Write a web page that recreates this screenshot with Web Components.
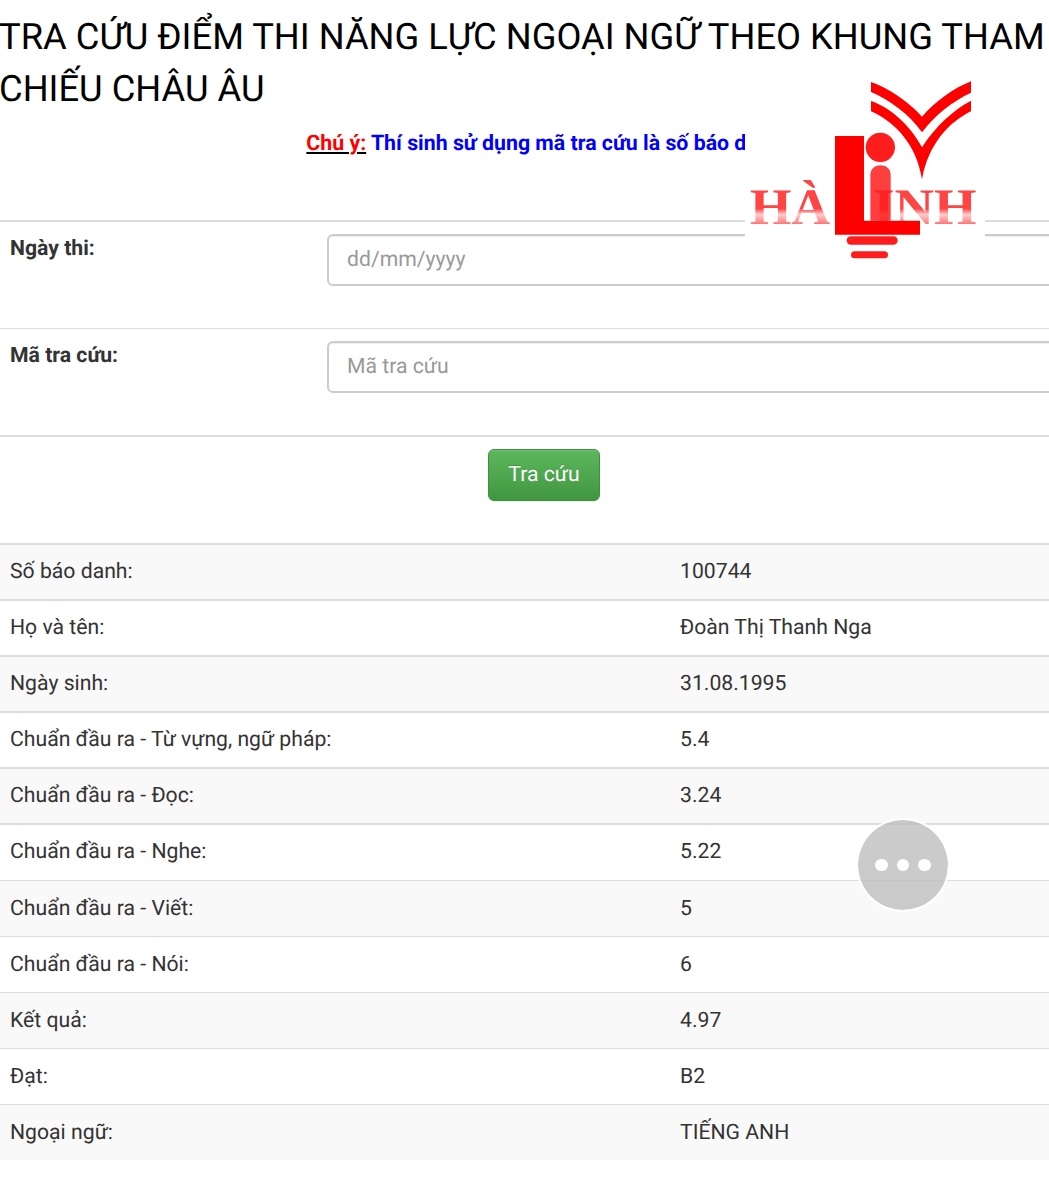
<!DOCTYPE html>
<html lang="vi">
<head>
<meta charset="utf-8">
<title>Tra cứu điểm thi</title>
<style>
    html, body {
        margin: 0;
        padding: 0;
        background: #fff;
        overflow: hidden;
        height: 1201px;
    }
    body {
        font-family: Roboto, "Liberation Sans", sans-serif;
        color: #333;
        text-rendering: geometricPrecision;
    }
    main {
        display: block;
        width: 1088px;
    }
</style>
</head>
<body>
<main>
    <page-title>TRA CỨU ĐIỂM THI NĂNG LỰC NGOẠI NGỮ THEO KHUNG THAM CHIẾU CHÂU ÂU</page-title>
    <page-note><u>Chú ý:</u> <span>Thí sinh sử dụng mã tra cứu là số báo danh</span></page-note>
    <form-row first label="Ngày thi:" placeholder="dd/mm/yyyy"></form-row>
    <form-row label="Mã tra cứu:" placeholder="Mã tra cứu"></form-row>
    <search-button>Tra cứu</search-button>
    <result-table>
        <result-row label="Số báo danh:">100744</result-row>
        <result-row label="Họ và tên:">Đoàn Thị Thanh Nga</result-row>
        <result-row label="Ngày sinh:">31.08.1995</result-row>
        <result-row label="Chuẩn đầu ra - Từ vựng, ngữ pháp:">5.4</result-row>
        <result-row label="Chuẩn đầu ra - Đọc:">3.24</result-row>
        <result-row label="Chuẩn đầu ra - Nghe:">5.22</result-row>
        <result-row label="Chuẩn đầu ra - Viết:">5</result-row>
        <result-row label="Chuẩn đầu ra - Nói:">6</result-row>
        <result-row label="Kết quả:">4.97</result-row>
        <result-row label="Đạt:">B2</result-row>
        <result-row label="Ngoại ngữ:">TIẾNG ANH</result-row>
    </result-table>
</main>
<site-logo></site-logo>
<more-button></more-button>

<script>
class PageTitle extends HTMLElement {
    constructor() {
        super();
        this.attachShadow({ mode: 'open' });
        this.shadowRoot.innerHTML = `
            <style>
                :host {
                    display: block;
                    width: 1050px;
                    margin-left: -1px;
                    padding-top: 11px;
                    font-size: 36.35px;
                    line-height: 52px;
                    font-weight: 400;
                    color: #000;
                }
            </style>
            <slot></slot>
        `;
    }
}

class PageNote extends HTMLElement {
    constructor() {
        super();
        this.attachShadow({ mode: 'open' });
        this.shadowRoot.innerHTML = `
            <style>
                :host {
                    display: block;
                    height: 105px;
                    padding-top: 15px;
                    box-sizing: border-box;
                    text-align: center;
                    font-size: 21.3px;
                    line-height: 28px;
                    font-weight: 700;
                }
                ::slotted(u) {
                    color: #f00;
                    text-decoration-color: #000;
                }
                ::slotted(span) {
                    color: #00f;
                }
            </style>
            <slot></slot>
        `;
    }
}

class FormRow extends HTMLElement {
    constructor() {
        super();
        this.attachShadow({ mode: 'open' });
        this.shadowRoot.innerHTML = `
            <style>
                :host {
                    display: grid;
                    grid-template-columns: 327px 1fr;
                    height: 107px;
                    box-sizing: border-box;
                    border-top: 1px solid #ddd;
                }
                :host([first]) {
                    height: 108px;
                    border-top: 2px solid #ddd;
                }
                label {
                    padding: 15px 0 0 10px;
                    font-size: 21.2px;
                    line-height: 24px;
                    font-weight: 700;
                    color: #333;
                }
                input {
                    display: block;
                    width: 100%;
                    height: 52px;
                    margin-top: 12px;
                    box-sizing: border-box;
                    padding: 0 18px 2px;
                    border: 2px solid #ccc;
                    border-radius: 6px;
                    box-shadow: inset 0 1px 1px rgba(0,0,0,.075);
                    font: 400 21.2px Roboto, sans-serif;
                    text-rendering: geometricPrecision;
                    color: #555;
                    background: #fff;
                }
                input::placeholder {
                    color: #999;
                    opacity: 1;
                }
            </style>
            <label></label>
            <div><input type="text"></div>
        `;
    }

    connectedCallback() {
        this.shadowRoot.querySelector('label').textContent = this.getAttribute('label');
        this.shadowRoot.querySelector('input').placeholder = this.getAttribute('placeholder');
    }
}

class SearchButton extends HTMLElement {
    constructor() {
        super();
        this.attachShadow({ mode: 'open' });
        this.shadowRoot.innerHTML = `
            <style>
                :host {
                    display: flex;
                    justify-content: center;
                    height: 108px;
                    box-sizing: border-box;
                    border-top: 2px solid #ddd;
                    padding-top: 12px;
                }
                button {
                    width: 112px;
                    height: 52px;
                    box-sizing: border-box;
                    padding: 0 0 2px;
                    border: 1px solid #3e8f3e;
                    border-radius: 6px;
                    background: linear-gradient(to bottom, #5cb85c, #419641);
                    box-shadow: inset 0 1px 0 rgba(255,255,255,.15), 0 1px 1px rgba(0,0,0,.075);
                    text-shadow: 0 -1px 0 rgba(0,0,0,.2);
                    font: 400 21.2px Roboto, sans-serif;
                    text-rendering: geometricPrecision;
                    color: #fff;
                }
            </style>
            <button type="button"><slot></slot></button>
        `;
    }
}

class ResultTable extends HTMLElement {
    constructor() {
        super();
        this.attachShadow({ mode: 'open' });
        this.shadowRoot.innerHTML = `
            <style>
                :host {
                    display: block;
                }
            </style>
            <slot></slot>
        `;
    }
}

class ResultRow extends HTMLElement {
    constructor() {
        super();
        this.attachShadow({ mode: 'open' });
        this.shadowRoot.innerHTML = `
            <style>
                :host {
                    display: grid;
                    grid-template-columns: 670px 1fr;
                    height: 56px;
                    box-sizing: border-box;
                    padding-bottom: 2px;
                    border-top: 2px solid #ddd;
                    align-items: center;
                    font-size: 21.2px;
                    color: #333;
                    background: #fff;
                }
                :host(:nth-child(odd)) {
                    background: #f9f9f9;
                }
                :host(:nth-child(6)) {
                    height: 57px;
                    padding-bottom: 3px;
                }
                :host(:nth-child(n+7)) {
                    border-top-width: 1px;
                    padding-top: 1px;
                }
                :host(:nth-child(n+8)) {
                    padding-top: 2px;
                }
                div {
                    padding-left: 10px;
                }
            </style>
            <div id="label"></div>
            <div><slot></slot></div>
        `;
    }

    connectedCallback() {
        this.shadowRoot.querySelector('#label').textContent = this.getAttribute('label');
    }
}

class SiteLogo extends HTMLElement {
    constructor() {
        super();
        this.attachShadow({ mode: 'open' });
        this.shadowRoot.innerHTML = `
            <style>
                :host {
                    position: absolute;
                    left: 745px;
                    top: 75px;
                    width: 240px;
                    height: 190px;
                    background: #fff;
                }
                svg {
                    display: block;
                }
                text {
                    font-family: "Liberation Serif", serif;
                    font-weight: 700;
                    font-size: 154px;
                }
            </style>
            <svg width="240" height="190" viewBox="15 15 720 570">
                <defs>
                    <linearGradient id="fade" x1="0" y1="360" x2="0" y2="462" gradientUnits="userSpaceOnUse">
                        <stop offset="0" stop-color="#f44"/>
                        <stop offset=".55" stop-color="#f44"/>
                        <stop offset=".72" stop-color="#fcc"/>
                        <stop offset="1" stop-color="#f77"/>
                    </linearGradient>
                </defs>
                <text x="30" y="462" fill="url(#fade)" textLength="240" lengthAdjust="spacingAndGlyphs">HÀ</text>
                <text x="400" y="462" fill="url(#fade)" textLength="310" lengthAdjust="spacingAndGlyphs">INH</text>
                <path fill="#f00" d="M393 36C450 55 510 100 546 140C585 95 640 55 693 34V68C640 92 585 135 546 187C510 135 450 90 393 66Z"/>
                <path fill="#f00" d="M393 93C450 112 510 165 546 232C585 170 640 120 693 92V124C630 155 565 220 546 328C530 225 465 155 393 124Z"/>
                <circle cx="421" cy="232" r="44" fill="#ff1c1c"/>
                <path fill="#ff1c1c" fill-opacity=".85" d="M391 452V315C391 276 452 276 452 315V452Z"/>
                <path fill="#f00" d="M285 198H372V452H540V494H285Z"/>
                <rect x="320" y="499" width="153" height="25" rx="12.5" fill="#ff1c1c"/>
                <rect x="333" y="544" width="111" height="21" rx="10.5" fill="#ff1c1c"/>
            </svg>
        `;
    }
}

class MoreButton extends HTMLElement {
    constructor() {
        super();
        this.attachShadow({ mode: 'open' });
        this.shadowRoot.innerHTML = `
            <style>
                :host {
                    position: absolute;
                    left: 856px;
                    top: 818px;
                    width: 94px;
                    height: 94px;
                    box-sizing: border-box;
                    display: flex;
                    justify-content: center;
                    align-items: center;
                    gap: 9px;
                    border-radius: 50%;
                    border: 2px solid rgba(255,255,255,.85);
                    background: rgba(190,190,190,.8);
                    background-clip: padding-box;
                }
                span {
                    width: 12.5px;
                    height: 12.5px;
                    border-radius: 50%;
                    background: #fff;
                }
            </style>
            <span></span><span></span><span></span>
        `;
    }
}

customElements.define('page-title', PageTitle);
customElements.define('page-note', PageNote);
customElements.define('form-row', FormRow);
customElements.define('search-button', SearchButton);
customElements.define('result-table', ResultTable);
customElements.define('result-row', ResultRow);
customElements.define('site-logo', SiteLogo);
customElements.define('more-button', MoreButton);
</script>
</body>
</html>
